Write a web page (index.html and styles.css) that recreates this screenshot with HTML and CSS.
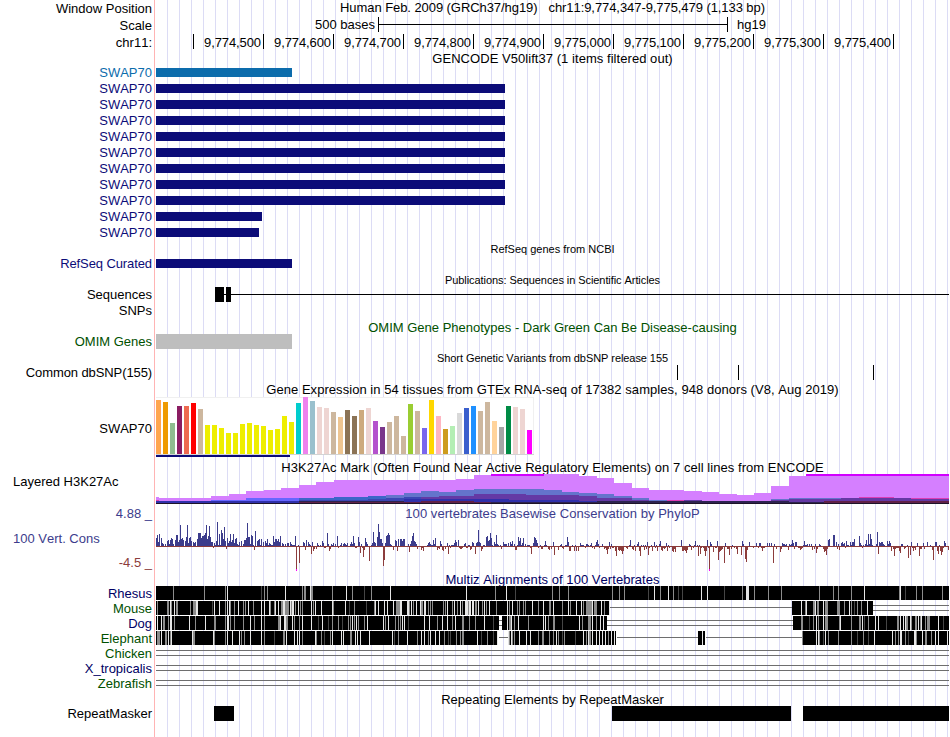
FILE: index.html
```
<!DOCTYPE html>
<html lang="en">
<head>
  <meta charset="UTF-8">
  <title>Human chr11:9,774,347-9,775,479 Genome Browser</title>
  <link rel="stylesheet" href="styles.css">
</head>
<body>
  <div class="browser">
    <div class="row h17"><div class="label">Window Position</div><div class="title position"><span>Human Feb. 2009 (GRCh37/hg19)</span><span>chr11:9,774,347-9,775,479 (1,133 bp)</span></div></div>
    <div class="row h17">
      <div class="label">Scale</div>
      <div class="track scale"><span class="scale-size">500 bases</span><div class="scale-bar"></div><span class="scale-db">hg19</span></div>
    </div>
    <div class="row h17">
      <div class="label">chr11:</div>
      <div class="track ruler">
        <span></span><span>9,774,500</span><span>9,774,600</span><span>9,774,700</span><span>9,774,800</span><span>9,774,900</span><span>9,775,000</span><span>9,775,100</span><span>9,775,200</span><span>9,775,300</span><span>9,775,400</span>
      </div>
    </div>

    <div class="row h13"><div class="label"></div><div class="title wide">GENCODE V50lift37 (1 items filtered out)</div></div>
    <div class="row gene light"><div class="label">SWAP70</div><div class="track"><div class="bar w136"></div></div></div>
    <div class="row gene"><div class="label">SWAP70</div><div class="track"><div class="bar w349"></div></div></div>
    <div class="row gene"><div class="label">SWAP70</div><div class="track"><div class="bar w349"></div></div></div>
    <div class="row gene"><div class="label">SWAP70</div><div class="track"><div class="bar w349"></div></div></div>
    <div class="row gene"><div class="label">SWAP70</div><div class="track"><div class="bar w349"></div></div></div>
    <div class="row gene"><div class="label">SWAP70</div><div class="track"><div class="bar w349"></div></div></div>
    <div class="row gene"><div class="label">SWAP70</div><div class="track"><div class="bar w349"></div></div></div>
    <div class="row gene"><div class="label">SWAP70</div><div class="track"><div class="bar w349"></div></div></div>
    <div class="row gene"><div class="label">SWAP70</div><div class="track"><div class="bar w349"></div></div></div>
    <div class="row gene"><div class="label">SWAP70</div><div class="track"><div class="bar w106"></div></div></div>
    <div class="row gene"><div class="label">SWAP70</div><div class="track"><div class="bar w103"></div></div></div>

    <div class="row h15"><div class="label"></div><div class="title small">RefSeq genes from NCBI</div></div>
    <div class="row gene refseq"><div class="label tight">RefSeq Curated</div><div class="track"><div class="bar w136"></div></div></div>

    <div class="row h15"><div class="label"></div><div class="title small narrow">Publications: Sequences in Scientific Articles</div></div>
    <div class="row h16">
      <div class="label">Sequences</div>
      <svg class="chart" width="793" height="16">
        <path d="M59 0h9v15h-9zM70 0h5v15h-5zM59 7h734v1h-734z"/>
      </svg>
    </div>
    <div class="row h16"><div class="label">SNPs</div></div>

    <div class="row h15 green"><div class="label"></div><div class="title">OMIM Gene Phenotypes - Dark Green Can Be Disease-causing</div></div>
    <div class="row h16 green"><div class="label">OMIM Genes</div><div class="track"><div class="omim w136"></div></div></div>

    <div class="row h15"><div class="label"></div><div class="title small narrow">Short Genetic Variants from dbSNP release 155</div></div>
    <div class="row h16">
      <div class="label tight">Common dbSNP(155)</div>
      <svg class="chart" width="793" height="16">
        <path d="M521 0h1v15h-1zM582 0h1v15h-1zM717 0h1v15h-1z"/>
      </svg>
    </div>

    <div class="row gtex-title"><div class="label"></div><div class="title wide">Gene Expression in 54 tissues from GTEx RNA-seq of 17382 samples, 948 donors (V8, Aug 2019)</div></div>
    <div class="row gtex"><div class="label">SWAP70</div><svg class="chart" id="gtex" width="793" height="62"></svg></div>

    <div class="row h15"><div class="label"></div><div class="title wide">H3K27Ac Mark (Often Found Near Active Regulatory Elements) on 7 cell lines from ENCODE</div></div>
    <div class="row h3k"><div class="label left">Layered H3K27Ac</div><svg class="chart" id="h3k" width="793" height="30"></svg></div>

    <div class="row phylop"><div class="label">4.88 _</div><div class="title wide">100 vertebrates Basewise Conservation by PhyloP</div></div>
    <div class="row cons">
      <div class="label cons-label"><span class="cons-name">100 Vert. Cons</span><span class="cons-min">-4.5 _</span></div>
      <svg class="chart" id="cons" width="793" height="52"></svg>
    </div>

    <div class="row h14 navy"><div class="label"></div><div class="title wide">Multiz Alignments of 100 Vertebrates</div></div>
    <div class="row h15 navy"><div class="label">Rhesus</div><svg class="chart" id="rhesus" width="793" height="15"></svg></div>
    <div class="row h15 green"><div class="label">Mouse</div><svg class="chart" id="mouse" width="793" height="15"></svg></div>
    <div class="row h15 navy"><div class="label">Dog</div><svg class="chart" id="dog" width="793" height="15"></svg></div>
    <div class="row h15 green"><div class="label">Elephant</div><svg class="chart" id="elephant" width="793" height="15"></svg></div>
    <div class="row h15 green"><div class="label">Chicken</div><div class="track gap"></div></div>
    <div class="row h15 navy"><div class="label">X_tropicalis</div><div class="track gap"></div></div>
    <div class="row h15 green"><div class="label">Zebrafish</div><div class="track gap"></div></div>

    <div class="row h15"><div class="label"></div><div class="title">Repeating Elements by RepeatMasker</div></div>
    <div class="row repeats">
      <div class="label">RepeatMasker</div>
      <svg class="chart" width="793" height="15">
        <path d="M58 0h20v15h-20zM456 0h179v15h-179zM647 0h146v15h-146z"/>
      </svg>
    </div>
  </div>
  <script src="tracks.js"></script>
</body>
</html>
```
FILE: styles.css
```
body {
  margin: 0;
  background: #fff;
  color: #000;
  font-family: "Liberation Sans", Arial, Helvetica, sans-serif;
  font-size: 13px;
  font-kerning: none;
}
/* pink line between labels and tracks, then a guide line every 12px */
.browser {
  width: 949px;
  height: 737px;
  overflow: hidden;
  background-image:
    linear-gradient(#ffb4b4, #ffb4b4),
    repeating-linear-gradient(to right, transparent 0, transparent 11px, #dcdcf5 11px, #dcdcf5 12px);
  background-size: 1px 100%, 793px 100%;
  background-position: 154px 0, 156px 0;
  background-repeat: no-repeat;
}
.row {
  display: flex;
  gap: 4px;
  height: 16px;
  line-height: 17px;
  white-space: nowrap;
}
.h13 { height: 13px; line-height: 15px; }
.h14 { height: 14px; line-height: 16px; }
.h15 { height: 15px; line-height: 16px; }
.h16 { height: 16px; line-height: 15px; }
.h17 { height: 17px; line-height: 18px; }
.label {
  width: 152px;
  flex: none;
  text-align: right;
}
.label.left {
  box-sizing: border-box;
  padding-left: 13px;
  text-align: left;
}
.track, .title {
  width: 793px;
  flex: none;
}
.title {
  text-align: center;
}
.h15 .title { line-height: 18px; }
.small { font-size: 11px; }
.wide { letter-spacing: 0.05px; }
.narrow { letter-spacing: -0.07px; }
.tight { letter-spacing: -0.1px; }
.h15 .narrow { line-height: 16px; }
.chart {
  display: block;
  flex: none;
  shape-rendering: crispEdges;
}
.green { color: #005000; }
.navy { color: #000064; }

/* position and ruler */
.position {
  display: flex;
  justify-content: center;
  gap: 11px;
  line-height: 16px;
  letter-spacing: -0.07px;
}
.scale {
  display: flex;
  line-height: 16px;
}
.scale-size {
  box-sizing: border-box;
  width: 222px;
  padding-right: 3px;
  text-align: right;
}
.scale-bar {
  width: 348px;
  height: 15px;
  border-left: 1px solid #000;
  border-right: 1px solid #000;
  background: linear-gradient(#000, #000) 0 7px / 100% 1px no-repeat;
}
.scale-db {
  padding-left: 9px;
}
.ruler {
  display: flex;
  letter-spacing: -0.1px;
}
.ruler span {
  box-sizing: border-box;
  width: 70px;
  height: 15px;
  padding-right: 2px;
  border-right: 1px solid #000;
  text-align: right;
}
.ruler span:first-child {
  width: 38px;
}

/* gene models */
.gene { color: #0c0c78; }
.light { color: #0c6cac; }
.bar {
  height: 9px;
  margin-top: 4px;
  background: currentColor;
}
.refseq { padding-top: 1px; }
.refseq .bar { margin-top: 3px; }
.refseq .label { line-height: 15px; }
.omim {
  height: 15px;
  background: #bebebe;
}
.w103 { width: 103px; }
.w106 { width: 106px; }
.w136 { width: 136px; }
.w349 { width: 349px; }

.gtex {
  height: 62px;
  line-height: 64px;
}
.h3k {
  height: 30px;
  line-height: 15px;
}
.phylop { color: #3c3c8c; }
.phylop .label { line-height: 19px; }
.phylop .title { line-height: 20px; }
.cons {
  height: 52px;
}
.cons-label {
  display: flex;
  flex-direction: column;
  justify-content: space-between;
  box-sizing: border-box;
  padding: 10px 0 1px 13px;
}
.cons-name {
  color: #3c3c8c;
  text-align: left;
}
.cons-min { color: #8c3c3c; }

/* unaligned species: double gap line */
.gap {
  height: 15px;
  background:
    linear-gradient(#6e6e6e, #6e6e6e) 0 4px / 100% 1px no-repeat,
    linear-gradient(#6e6e6e, #6e6e6e) 0 9px / 100% 1px no-repeat;
}
.repeats {
  height: 31px;
  line-height: 15px;
}
```
FILE: tracks.js
```
const NS = "http://www.w3.org/2000/svg";
const LEFT = 156;

function rect(svg, x, y, w, h, fill) {
  const r = document.createElementNS(NS, "rect");
  r.setAttribute("x", x);
  r.setAttribute("y", y);
  r.setAttribute("width", w);
  r.setAttribute("height", h);
  r.setAttribute("fill", fill);
  svg.appendChild(r);
}

// GTEx: height and colour for each tissue
const tan = "#cdb79e", yellow = "#eeee00", pink = "#eed5d2";
const tissues = [
  [54, "#ffa54f"], [52, "#ee9a00"], [31, "#8fbc8f"], [48, "#8b1c62"], [48, "#ee6a50"], [51, "#ff0000"], [45, tan],
  [29, yellow], [29, yellow], [26, yellow], [21, yellow], [21, yellow], [30, yellow], [31, yellow],
  [29, yellow], [28, yellow], [24, yellow], [25, yellow], [38, yellow], [32, yellow],
  [51, "#00cdcd"], [57, "#ee82ee"], [53, "#9ac0cd"], [47, pink], [46, pink], [42, tan], [37, "#eec591"],
  [44, "#8b7355"], [38, "#8b7355"], [44, "#cdaa7d"], [46, pink], [33, "#b452cd"], [27, "#7a378b"],
  [32, tan], [38, tan], [18, tan], [50, "#9acd32"], [43, tan], [26, "#7a67ee"], [54, "#ffd700"],
  [38, "#ffb6c1"], [25, "#cd9b1d"], [28, "#b4eeb4"], [41, "#d9d9d9"], [46, "#3a5fcd"], [48, "#1e90ff"],
  [43, tan], [52, tan], [33, "#ffd39b"], [27, "#a6a6a6"], [48, "#008b45"], [47, pink], [45, pink], [24, "#ff00ff"]
];
const gtex = document.getElementById("gtex");
rect(gtex, 0, 0, 378, 58, "#f0f0f0");
rect(gtex, 0, 1, 377, 56, "#ffffff");
rect(gtex, 0, 57, 378, 1, "#d3d3d3");
tissues.forEach((t, i) => rect(gtex, i * 7, 57 - t[0], 5, t[0], t[1]));
rect(gtex, 0, 58, 134, 2, "#0c0c78");

// Layered H3K27Ac: [x, top] steps, each layer filled down to the base line
const h3k = document.getElementById("h3k");
const layers = [
  ["#d57fff", [[156, 497], [159, 498], [211, 496], [229, 494], [246, 491], [264, 490], [281, 488], [299, 485], [316, 482], [334, 480], [456, 479], [474, 475], [491, 474], [579, 476], [597, 478], [614, 483], [632, 488], [649, 490], [684, 491], [702, 492], [719, 494], [737, 495], [754, 493], [771, 486], [789, 476], [806, 474], [949, 0]]],
  ["#6666ff", [[211, 500], [246, 498], [299, 504]]],
  ["#3c66c8", [[299, 498], [334, 497], [368, 496], [386, 504]]],
  ["#6474cc", [[386, 495], [404, 493], [421, 491], [439, 492], [456, 490], [474, 489], [544, 490], [562, 492], [579, 493], [597, 494], [614, 496], [632, 498], [649, 500], [667, 504], [771, 499], [789, 498], [841, 504]]],
  ["#dc3cb4", [[156, 500], [159, 504], [667, 500], [684, 504], [859, 497], [894, 504], [911, 498], [949, 0]]],
  ["#3c46b4", [[264, 501], [299, 500], [368, 499], [386, 498], [404, 497], [421, 504]]],
  ["#6439a5", [[421, 497], [439, 496], [474, 494], [526, 495], [579, 496], [597, 498], [632, 500], [649, 501], [684, 500], [702, 501], [771, 500], [789, 499], [841, 498], [911, 499], [949, 0]]],
  ["#3030aa", [[156, 501], [404, 499], [509, 500], [579, 501], [597, 504]]],
  ["#2d2350", [[299, 501], [404, 502], [579, 502], [597, 501], [789, 502], [949, 0]]],
  ["#602047", [[299, 502], [421, 501], [474, 502], [491, 504], [824, 501], [949, 0]]]
];
layers.forEach(([fill, steps]) => {
  for (let i = 0; i < steps.length - 1; i++) {
    const [x, top] = steps[i];
    if (top < 504) rect(h3k, x - LEFT, top - 474, steps[i + 1][0] - x, 503 - top, fill);
  }
});
// clipped peaks
rect(h3k, 335, 0, 53, 2, "#d200ff");
rect(h3k, 650, 0, 143, 2, "#d200ff");
rect(h3k, 0, 29, 793, 1, "#1e1428");

// PhyloP score for each pixel column, above or below zero
const scores = [
  8,11,4,12,-1,8,3,2,-1,2,-1,5,6,2,6,8,7,2,-1,6,11,11,4,6,21,7,8,6,-1,5,9,21,3,8,9,5,-1,4,3,4,-1,7,13,13,13,8,10,10,11,13,
  21,7,10,20,9,4,4,-2,3,1,5,24,1,12,1,16,13,7,19,5,-3,8,3,5,12,4,6,12,3,7,8,2,1,4,-1,5,-1,2,6,6,8,23,9,9,2,11,10,1,-4,15,
  -1,5,6,7,1,7,-1,4,-1,5,3,7,1,3,2,1,1,10,4,7,7,5,7,4,10,-1,3,2,-1,2,-1,3,3,-1,4,2,1,1,1,10,-24,-1,1,-17,-1,-1,-1,4,3,-4,
  6,-1,4,2,1,-8,4,-5,-3,-1,-3,3,1,-1,1,-1,5,3,-2,-2,-1,13,2,-5,-3,2,1,3,-1,2,-1,10,-2,-1,1,3,-1,2,3,2,1,3,-1,-1,2,4,2,10,3,-2,
  -2,-1,9,4,-7,2,-2,-11,-4,8,4,2,-1,-15,-1,1,3,14,4,3,-1,9,22,14,7,7,3,-20,-14,3,10,11,13,11,2,1,-1,-4,-1,6,5,-5,7,-1,7,7,5,7,7,-1,
  -1,-1,2,-6,2,5,10,13,5,4,2,-3,-1,-1,
  -1,-4,-2,-5,-1,-1,-1,1,3,4,2,1,1,6,2,8,-1,-4,-2,-3,5,2,-4,-5,-1,-3,-1,3,-8,1,-2,1,1,1,3,6,4,-1,6,-2,-3,-3,-2,-1,2,3,-2,-2,1,1,
  -4,-3,4,3,-1,-8,3,4,16,4,3,-5,-3,1,1,-1,9,10,5,6,13,8,1,-1,4,2,11,2,1,-1,1,-3,-1,4,2,2,2,-1,3,-1,4,2,5,-1,2,-4,-4,1,9,5,
  8,1,3,8,-1,2,-1,1,1,1,-2,-8,-1,3,9,8,6,3,-2,-1,1,-3,-3,-1,1,5,1,-1,-3,-4,-1,-3,-1,4,-9,-1,-1,-1,-4,-1,1,2,-2,-3,-1,1,1,9,4,-5,
  -5,-1,1,-1,-5,1,-5,-1,-5,-1,3,1,1,1,-1,-2,2,2,1,-1,1,3,-2,-1,-3,1,4,6,2,-2,-1,-1,2,-1,-3,-2,-4,-8,-3,4,-3,2,-2,-2,-1,-5,-10,-1,-4,-5,
  -4,-5,-8,-5,-1,-1,-2,-3,-1,1,6,-1,-3,-4,1,-5,-1,2,4,-5,-10,1,-1,1,-4,1,-3,4,-9,-2,-1,1,-5,-1,4,-2,1,-5,-1,2,5,-4,-5,-2,-3,-2,3,-5,1,-2,
  -1,-1,-5,-6,-3,-6,-1,-1,-1,-1,-1,6,-5,-5,-4,-5,-7,-4,-1,2,
  1,-4,-1,-2,1,5,-1,1,-10,1,-8,-2,-1,-2,-5,-10,-5,6,-2,-24,4,2,-1,-6,-1,-2,-2,5,-14,-6,-5,-4,-3,-1,-17,3,-1,-3,-3,-9,-1,-3,1,-1,-2,-1,-3,-8,-1,-1,
  -1,-9,5,2,-1,-13,-16,-4,-1,4,-1,-1,-1,-2,-1,-1,3,-1,-2,3,3,-2,-5,-2,-2,-1,-1,3,-1,3,-1,3,-1,-17,2,-1,-3,-1,-1,-1,-6,-3,3,2,2,1,2,-1,-4,2,
  1,2,6,3,-3,4,4,-1,-2,-2,-4,-3,-2,1,5,1,1,2,-1,2,-1,2,-4,-1,-3,2,-7,-3,-1,2,1,-1,-1,-3,-6,-5,-9,-3,6,7,-1,-1,-1,11,11,-1,4,-3,2,-4,
  -1,3,4,2,3,-2,5,1,1,-1,4,1,4,4,7,-1,-1,-1,-1,10,3,1,-2,1,-1,2,6,1,12,2,12,7,1,-1,-1,-1,2,14,-8,4,3,4,4,2,1,-1,-1,5,2,5,
  3,-5,-1,-3,-10,-3,-2,-2,-2,-5,-7,2,2,-1,-3,-2,-1,1,-12,-1,-9,4,-2,-5,-2,-4,-1,3,-1,-10,-3,-3,-1,3,-3,-1,-1,4,-1,-1,1,-1,-4,-14,-1,4,4,-5,-8,1,
  -5,-9,-6,-2,5,3,-1,-1,-4
];
const cons = document.getElementById("cons");
scores.forEach((s, x) => {
  if (s > 0) rect(cons, x, 26 - s, 1, s, "#3c3c8c");
  else rect(cons, x, 26, 1, -s, "#8c3c3c");
  if (s <= -24) rect(cons, x, 49, 1, 2, "#ff00ff");
});
rect(cons, 0, 26, 793, 1, "#8c3c3c");

// Alignment strips. blocks: aligned ranges, lines: gap lines,
// marks: lighter columns as x plus w (white), g (gray) or d (dark) and a width
const shades = { w: "#e6e6e6", g: "#8c8c8c", d: "#464646" };
const species = {
  rhesus: {
    blocks: [[156, 949]],
    lines: [],
    marks: "173g 204g 225g 227w 261d 264g 267g 285w 302g 304g2 310w 311g2 332g 346w 352g 364d 371g 390w 466w 495g 506w 515d 552g 559g 568g 612g 619g 624g 648d 654w 660g 668w 673g 678d 682d 701w 707w 724d 742g 746w3 754g 768g 781g 819g 833g 838g 851g 864w 899g 900w 905d 916g 922g 942g"
  },
  mouse: {
    blocks: [[156, 610], [792, 873]],
    lines: [[610, 792, 6], [873, 949, 4], [873, 949, 9]],
    marks: "157g 167g2 170w 171g 174w 176g2 190g 193g3 196w2 212d 214w 219w 225g 227w 229w 230g 234g 238w 243g 245g 248w 253g 261w 264w 269w 270g 274g 275w 278w 281g2 283w2 285g4 290w 291g 292w2 295g 298w 300g 302g 311w 313g 315w 321w 332w 333g 345w 349d 354g 366d 374g 375w 378w 384w 387w 393w 396g4 400w2 407w2 409g 411w 413g 416w 420w 421g2 424w2 428g 430g 432g 443g 445g 447w 452g 454w 457g 460w 462g 465w3 468g 469w2 472w2 475g2 478w 482g 484w 486g 489w 496g 507w 509g 512w 517g 519g 523g 525g 532w 538g 543w 549g2 553w 562g 568w 570g 576w 581w 583g 586g6 592w 594g3 601w 604g 609w 801w 805g 806w 813g2 815w 817g 818g 823w 825g3 837g3 844g 849w 851g 854d 857g 861g 867w"
  },
  dog: {
    blocks: [[156, 499], [502, 607], [793, 949]],
    lines: [[499, 502, 4], [499, 502, 9], [607, 793, 4], [607, 793, 9]],
    marks: "157w 161w 163g2 168g 170w2 174g 189w 195g 205w 214g2 225g 227w2 230g 234g 243g 250w 254g 261w 264g 278g2 280w 284w2 286g2 292w 294g 299g 302w 311w 318d 322w 328d 332g 338g 342d 348g 350g 352w 354g 356w 358g 364g 367w 383w 385g 388w 395g 398g 400g 402w 404w 408d 424w 429w 437g 442w 447w 452g 455w 462g2 469g 475g 484w 493d 507w 509g2 511w 514g 518w 528g 543w 545w 548g 553g2 562d 579w 582g 588g3 592w 596g 600w 603w 801g2 809d 813g 816w 818g 823w 825g3 839g 840w 851g 859g2 862w 864d 868g 875w 878w 886d 897g2 900w 903w 905w 906g2 910w 911g 915g2 918w 920g 921w 925g 927g2 929g 938w 943d"
  },
  elephant: {
    blocks: [[156, 498], [508, 616], [698, 705], [802, 949]],
    lines: [[499, 508, 6], [617, 698, 6], [706, 802, 6]],
    marks: "157g3 161w 165g 166g 168w 170g 171w 192w 193g2 213w 214g 225g 227w 232w 239w 241g 244g 250w 261w 264g 274d 283g2 286w 294w 297w 299w 302g 315w 316g 321g 324d 330g 332w 341w 343w 350g2 355w 357w 360w 369w 392w 394d 398g 407w 417g 421w 424w 428g 430w 435w 439w 444g 448d 450d 456g 460g 462g2 477w 481d 487g 493d 497w 508w 509g 511w 512g 514g 519w 526w 530w 538g 542g2 549g 553g 556w 558g 562d 564g 575d 583w 586g 588w 589g2 592w 596w 599w 602w 605w 608g 611w 614w 702w 802g 816w 818w 819g 823d 825w 828g 838g 851g 857d 863g 868d 874w 892w 895g 898g 900w2 905g 908d 914w2 916g 922w 925g2 931g 935w 938w 947w"
  }
};
Object.entries(species).forEach(([id, s]) => {
  const svg = document.getElementById(id);
  s.blocks.forEach(([a, b]) => rect(svg, a - LEFT, 0, b - a, 14, "#000"));
  s.lines.forEach(([a, b, y]) => rect(svg, a - LEFT, y, b - a, 1, "#6e6e6e"));
  s.marks.split(" ").forEach(m => {
    const [, x, shade, w] = m.match(/(\d+)([wgd])(\d*)/);
    rect(svg, x - LEFT, 0, w || 1, 14, shades[shade]);
  });
});
```
